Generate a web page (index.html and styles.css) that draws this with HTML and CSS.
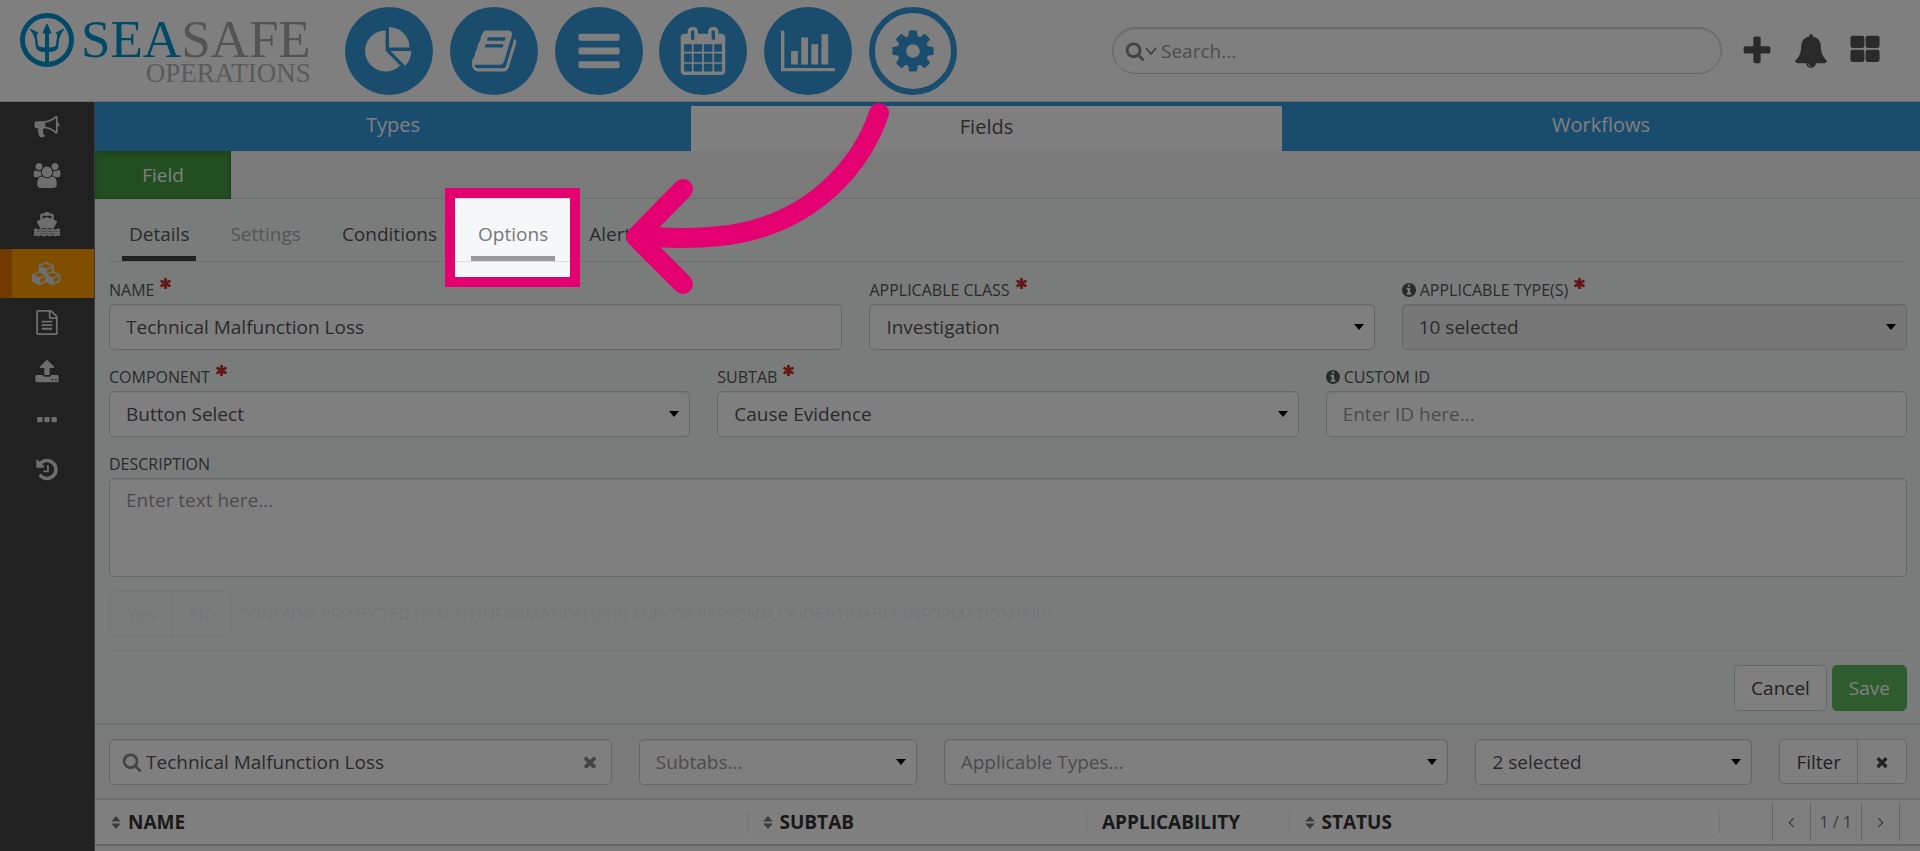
FILE: index.html
```html
<!DOCTYPE html>
<html lang="en">
<head>
    <meta charset="UTF-8">
    <meta name="viewport" content="width=device-width, initial-scale=1.0">
    <title>SeaSafe Operations - Fields</title>
    <link rel="stylesheet" href="styles.css">
</head>
<body>

    <!-- icon sprite -->
    <svg class="sprite" aria-hidden="true">
        <symbol id="i-pie" viewBox="0 0 1792 1792"><path d="M768 890l546 546q-106 108-247.5 168t-298.5 60q-209 0-385.5-103t-279.5-279.5-103-385.5 103-385.5 279.5-279.5 385.5-103v762zm187 6h773q0 157-60 298.5t-168 247.5zm709-128h-768v-768q209 0 385.5 103t279.5 279.5 103 385.5z"/></symbol>
        <symbol id="i-book" viewBox="0 0 1792 1792"><path d="M1703 478q40 57 18 129l-275 906q-19 64-76.500 107.500t-122.500 43.500h-923q-77 0-148.500-53.500t-99.500-131.500q-24-67-2-127 0-4 3-27t4-37q1-8-3-21.500t-3-19.500q2-11 8-21t16.500-23.500 16.500-23.500q23-38 45-91.500t30-91.500q3-10 .5-30t-.5-28q3-11 17-28t17-23q21-36 42-92t25-90q1-9-2.500-32t.5-28q4-13 22-30.500t22-22.500q19-26 42.500-84.500t27.500-96.500q1-8-3-25.500t-2-26.500q2-8 9-18t18-23 17-21q8-12 16.500-30.500t15-35 16-36 19.500-32 26.500-23.500 36-11.500 47.500 5.500l-1 3q38-9 51-9h761q74 0 114 56t18 130l-274 906q-36 119-71.500 153.500t-128.500 34.500h-869q-27 0-38 15-11 16-1 43 24 70 144 70h923q29 0 56-15.500t35-41.500l300-987q7-22 5-57 38 15 59 43zm-1064 2q-4 13 2 22.500t20 9.500h608q13 0 25.500-9.500t16.500-22.500l21-64q4-13-2-22.500t-20-9.500h-608q-13 0-25.500 9.500t-16.500 22.500zm-83 256q-4 13 2 22.500t20 9.500h608q13 0 25.500-9.500t16.500-22.500l21-64q4-13-2-22.500t-20-9.500h-608q-13 0-25.500 9.500t-16.500 22.500z"/></symbol>
        <symbol id="i-bars" viewBox="0 0 1792 1792"><rect x="128" y="256" width="1536" height="256" rx="64"/><rect x="128" y="768" width="1536" height="256" rx="64"/><rect x="128" y="1280" width="1536" height="256" rx="64"/></symbol>
        <symbol id="i-calendar" viewBox="0 0 1792 1792"><path d="M192 1664h288v-288h-288v288zm352 0h320v-288h-320v288zm-352-352h288v-320h-288v320zm352 0h320v-320h-320v320zm-352-384h288v-288h-288v288zm736 736h320v-288h-320v288zm-384-736h320v-288h-320v288zm768 736h288v-288h-288v288zm-384-352h320v-320h-320v320zm-352-864v-288q0-13-9.500-22.500t-22.500-9.500h-64q-13 0-22.500 9.500t-9.500 22.500v288q0 13 9.500 22.500t22.500 9.500h64q13 0 22.500-9.500t9.500-22.500zm736 864h288v-320h-288v320zm-384-384h320v-288h-320v288zm384 0h288v-288h-288v288zm32-480v-288q0-13-9.500-22.500t-22.500-9.500h-64q-13 0-22.500 9.500t-9.500 22.500v288q0 13 9.500 22.500t22.500 9.500h64q13 0 22.500-9.500t9.500-22.500zm384-64v1280q0 52-38 90t-90 38h-1408q-52 0-90-38t-38-90v-1280q0-52 38-90t90-38h128v-96q0-66 47-113t113-47h64q66 0 113 47t47 113v96h384v-96q0-66 47-113t113-47h64q66 0 113 47t47 113v96h128q52 0 90 38t38 90z"/></symbol>
        <symbol id="i-chart" viewBox="0 0 2048 1792"><path d="M640 896v512h-256v-512h256zm384-512v1024h-256v-1024h256zm1024 1152v128h-2048v-1536h128v1408h1920zm-640-896v768h-256v-768h256zm384-384v1152h-256v-1152h256z"/></symbol>
        <symbol id="i-cog" viewBox="0 0 1792 1792"><path d="M1152 896q0-106-75-181t-181-75-181 75-75 181 75 181 181 75 181-75 75-181zm512-109v222q0 12-8 23t-20 13l-185 28q-19 54-39 91 35 50 107 138 10 12 10 25t-9 23q-27 37-99 108t-94 71q-12 0-26-9l-138-108q-44 23-91 38-16 136-29 186-7 28-36 28h-222q-14 0-24.500-8.500t-11.500-21.500l-28-184q-49-16-90-37l-141 107q-10 9-25 9-14 0-25-11-126-114-165-168-7-10-7-23 0-12 8-23 15-21 51-66.500t54-70.500q-27-50-41-99l-183-27q-13-2-21-12.500t-8-23.500v-222q0-12 8-23t19-13l186-28q14-46 39-92-40-57-107-138-10-12-10-24 0-10 9-23 26-36 98.500-107.500t94.500-71.500q13 0 26 10l138 107q44-23 91-38 16-136 29-186 7-28 36-28h222q14 0 24.500 8.500t11.500 21.500l28 184q49 16 90 37l142-107q9-9 24-9 13 0 25 10 129 119 165 170 7 8 7 22 0 12-8 23-15 21-51 66.500t-54 70.500q26 50 41 98l183 28q13 2 21 12.500t8 23.500z"/></symbol>
        <symbol id="i-search" viewBox="0 0 1792 1792"><path d="M1216 832q0-185-131.500-316.500t-316.500-131.500-316.500 131.500-131.500 316.500 131.500 316.500 316.500 131.500 316.500-131.500 131.500-316.500zm512 832q0 52-38 90t-90 38q-54 0-90-38l-343-342q-179 124-399 124-143 0-273.500-55.500t-225-150-150-225-55.500-273.500 55.500-273.500 150-225 225-150 273.500-55.500 273.500 55.500 225 150 150 225 55.500 273.500q0 220-124 399l343 343q37 37 37 90z"/></symbol>
        <symbol id="i-plus" viewBox="0 0 1792 1792"><path d="M1600 736v192q0 40-28 68t-68 28h-416v416q0 40-28 68t-68 28h-192q-40 0-68-28t-28-68v-416h-416q-40 0-68-28t-28-68v-192q0-40 28-68t68-28h416v-416q0-40 28-68t68-28h192q40 0 68 28t28 68v416h416q40 0 68 28t28 68z"/></symbol>
        <symbol id="i-bell" viewBox="0 0 1792 1792"><path d="M912 1696q0-16-16-16-59 0-101.500-42.500t-42.500-101.500q0-16-16-16t-16 16q0 73 51.500 124.500t124.500 51.500q16 0 16-16zm816-288q0 52-38 90t-90 38h-448q0 106-75 181t-181 75-181-75-75-181h-448q-52 0-90-38t-38-90q50-42 91-88t85-119.500 74.500-158.500 50-206 19.500-260q0-152 117-282.500t307-158.500q-8-19-8-39 0-40 28-68t68-28 68 28 28 68q0 20-8 39 190 28 307 158.500t117 282.500q0 139 19.500 260t50 206 74.500 158.500 85 119.500 91 88z"/></symbol>
        <symbol id="i-grid" viewBox="0 0 1792 1792"><rect x="128" y="96" width="736" height="640" rx="112"/><rect x="928" y="96" width="736" height="640" rx="112"/><rect x="128" y="832" width="736" height="640" rx="112"/><rect x="928" y="832" width="736" height="640" rx="112"/></symbol>
        <symbol id="i-bullhorn" viewBox="0 0 1792 1792"><path d="M1664 640q53 0 90.500 37.500t37.500 90.500-37.500 90.500-90.500 37.500v384q0 52-38 90t-90 38q-417-347-812-380-58 19-91 66t-31 100.500 40 92.500q-20 33-23 65.500t6 58 33.500 55 48 50 61.500 50.500q-29 58-111.500 83t-168.500 11.500-132-55.500q-7-23-29.500-87.500t-32-94.500-23-89-15-101 3.500-98.500 22-110.500h-122q-66 0-113-47t-47-113v-192q0-66 47-113t113-47h480q435 0 896-384 52 0 90 38t38 90v384zm-128 604v-954q-394 302-768 343v270q377 42 768 341z"/></symbol>
        <symbol id="i-users" viewBox="0 0 2048 1792"><path d="M657 896q-162 5-265 128h-134q-82 0-138-40.500t-56-118.500q0-353 124-353 6 0 43.500 21t97.500 42.500 119 21.500q67 0 133-23-5 37-5 66 0 159 93 279zm1071 637q0 120-73 189.500t-194 69.500h-874q-121 0-194-69.500t-73-189.500q0-53 3.500-103.500t14-109 26.500-108.500 43-97.500 62-81 85.500-53.500 111.500-20q10 0 43 21.500t73 48 107 48 135 21.500 135-21.500 107-48 73-48 43-21.500q61 0 111.500 20t85.500 53.500 62 81 43 97.500 26.500 108.500 14 109 3.500 103.500zm-1024-1277q0 106-75 181t-181 75-181-75-75-181 75-181 181-75 181 75 75 181zm704 384q0 159-112.500 271.500t-271.500 112.500-271.500-112.500-112.500-271.500 112.500-271.500 271.500-112.500 271.500 112.500 112.500 271.500zm576 225q0 78-56 118.500t-138 40.500h-134q-103-123-265-128 93-120 93-279 0-29-5-66 66 23 133 23 59 0 119-21.500t97.500-42.500 43.500-21q124 0 124 353zm-128-609q0 106-75 181t-181 75-181-75-75-181 75-181 181-75 181 75 75 181z"/></symbol>
        <symbol id="i-ship" viewBox="0 0 28 26"><path d="M11.500 1.500Q11.500 0 13 0h2q1.500 0 1.500 1.500h2.500q2 0 2 2v4.500l2.500 1q1.500.6.700 2l-3.200 6h-14l-3.200-6q-.8-1.400.7-2l2.500-1v-4.500q0-2 2-2zM9.500 4v3l4.500-1.700 4.500 1.700v-3z"/><path d="M.5 19.500l2-1.500 2.500 1.500 3-1.500 3 1.500 3-1.500 3 1.500 3-1.500 3 1.500 2.500-1.500 2 1.500M.5 22l2-1.500 2.500 1.500 3-1.500 3 1.500 3-1.500 3 1.500 3-1.500 3 1.500 2.500-1.500 2 1.500M.5 24.500l2-1.500 2.500 1.500 3-1.500 3 1.500 3-1.500 3 1.500 3-1.500 3 1.500 2.500-1.500 2 1.500" fill="none" stroke="currentColor" stroke-width="1.800"/></symbol>
        <symbol id="i-cubes" viewBox="0 0 2304 1792"><path d="M640 1632l384-192v-314l-384 164v342zm-64-454l404-173-404-173-404 173zm1088 454l384-192v-314l-384 164v342zm-64-454l404-173-404-173-404 173zm-448-293l384-165v-266l-384 164v267zm-64-379l441-189-441-189-441 189zm1088 518v416q0 36-19 67t-52 47l-448 224q-25 14-57 14t-57-14l-448-224q-5-2-7-4-2 2-7 4l-448 224q-25 14-57 14t-57-14l-448-224q-33-16-52-47t-19-67v-416q0-38 21.500-70t56.500-48l434-186v-400q0-38 21.500-70t56.500-48l448-192q23-10 50-10t50 10l448 192q35 16 56.500 48t21.500 70v400l434 186q36 16 57 48t21 70z"/></symbol>
        <symbol id="i-file" viewBox="0 0 1792 1792"><path d="M1596 380q28 28 48 76t20 88v1152q0 40-28 68t-68 28h-1344q-40 0-68-28t-28-68v-1600q0-40 28-68t68-28h896q40 0 88 20t76 48zm-444-244v376h376q-10-29-22-41l-313-313q-12-12-41-22zm384 1528v-1024h-416q-40 0-68-28t-28-68v-416h-768v1536h1280zm-1024-864q0-14 9-23t23-9h704q14 0 23 9t9 23v64q0 14-9 23t-23 9h-704q-14 0-23-9t-9-23v-64zm736 224q14 0 23 9t9 23v64q0 14-9 23t-23 9h-704q-14 0-23-9t-9-23v-64q0-14 9-23t23-9h704zm0 256q14 0 23 9t9 23v64q0 14-9 23t-23 9h-704q-14 0-23-9t-9-23v-64q0-14 9-23t23-9h704z"/></symbol>
        <symbol id="i-upload" viewBox="0 0 1792 1792"><path d="M1344 1472q0-26-19-45t-45-19-45 19-19 45 19 45 45 19 45-19 19-45zm256 0q0-26-19-45t-45-19-45 19-19 45 19 45 45 19 45-19 19-45zm128-224v320q0 40-28 68t-68 28h-1472q-40 0-68-28t-28-68v-320q0-40 28-68t68-28h427q21 56 70.500 92t110.500 36h256q61 0 110.500-36t70.500-92h427q40 0 68 28t28 68zm-325-648q-17 40-59 40h-256v448q0 26-19 45t-45 19h-256q-26 0-45-19t-19-45v-448h-256q-42 0-59-40-17-39 14-69l448-448q18-19 45-19t45 19l448 448q31 30 14 69z"/></symbol>
        <symbol id="i-dots" viewBox="0 0 1792 1792"><rect x="192" y="640" width="384" height="384" rx="96"/><rect x="704" y="640" width="384" height="384" rx="96"/><rect x="1216" y="640" width="384" height="384" rx="96"/></symbol>
        <symbol id="i-history" viewBox="0 0 1792 1792"><path d="M1664 896q0 156-61 298t-164 245-245 164-298 61q-172 0-327-72.500t-264-204.500q-7-10-6.500-22.500t8.500-20.500l137-138q10-9 25-9 16 2 23 12 73 95 179 147t225 52q104 0 198.500-40.500t163.500-109.500 109.500-163.500 40.500-198.500-40.500-198.500-109.500-163.500-163.500-109.500-198.500-40.500q-98 0-188 35.500t-160 101.500l137 138q31 30 14 69-17 40-59 40h-448q-26 0-45-19t-19-45v-448q0-42 40-59 39-17 69 14l130 129q107-101 244.500-156.500t284.500-55.500q156 0 298 61t245 164 164 245 61 298zm-640-288v448q0 14-9 23t-23 9h-320q-14 0-23-9t-9-23v-64q0-14 9-23t23-9h224v-352q0-14 9-23t23-9h64q14 0 23 9t9 23z"/></symbol>
        <symbol id="i-info" viewBox="128 128 1536 1536"><path d="M1152 1376v-160q0-14-9-23t-23-9h-96v-512q0-14-9-23t-23-9h-320q-14 0-23 9t-9 23v160q0 14 9 23t23 9h96v320h-96q-14 0-23 9t-9 23v160q0 14 9 23t23 9h448q14 0 23-9t9-23zm-128-896v-160q0-14-9-23t-23-9h-192q-14 0-23 9t-9 23v160q0 14 9 23t23 9h192q14 0 23-9t9-23zm640 416q0 209-103 385.500t-279.500 279.500-385.500 103-385.500-103-279.500-279.500-103-385.500 103-385.500 279.500-279.500 385.500-103 385.500 103 279.500 279.500 103 385.500z"/></symbol>
        <symbol id="i-times" viewBox="0 0 1792 1792"><path d="M1490 1322q0 40-28 68l-136 136q-28 28-68 28t-68-28l-294-294-294 294q-28 28-68 28t-68-28l-136-136q-28-28-28-68t28-68l294-294-294-294q-28-28-28-68t28-68l136-136q28-28 68-28t68 28l294 294 294-294q28-28 68-28t68 28l136 136q28 28 28 68t-28 68l-294 294 294 294q28 28 28 68z"/></symbol>
        <symbol id="i-star" viewBox="0 0 10 10"><path d="M5 1v8M1.500 3l7 4M8.500 3l-7 4" fill="none" stroke="currentColor" stroke-width="2.600" stroke-linecap="round"/></symbol>
        <symbol id="i-sort" viewBox="0 0 10 14"><path d="M5 0l5 6H0zM0 8h10l-5 6z"/></symbol>
        <symbol id="i-left" viewBox="0 0 10 10"><path d="M7 1L3 5l4 4" fill="none" stroke="currentColor" stroke-width="1.200"/></symbol>
        <symbol id="i-right" viewBox="0 0 10 10"><path d="M3 1l4 4-4 4" fill="none" stroke="currentColor" stroke-width="1.200"/></symbol>
        <symbol id="i-down" viewBox="0 0 12 12"><path d="M1 3l5 6 5-6" fill="none" stroke="currentColor" stroke-width="1.500"/></symbol>
    </svg>

    <header class="header">
        <a class="logo" href="#">
            <svg class="logo-mark" viewBox="0 0 54 54" aria-hidden="true">
                <circle cx="27" cy="27" r="24.500" fill="none" stroke="currentColor" stroke-width="5"/>
                <path d="M27 11l4 9h-2.500v15q7 0 8-3 1-9 1.500-11l-2-1 8-4q-3 3-5 9-1 5-1.500 10.500-2 3-9 3V52h-3V38.500q-7 0-9-3-.5-5.500-1.500-10.500-2-6-5-9l8 4-2 1q.5 2 1.500 11 1 3 8 3V20H23z" stroke="currentColor"/>
            </svg>
            <span class="logo-text">
                <span class="logo-name"><span class="logo-sea">SEA</span>SAFE</span>
                <span class="logo-sub">OPERATIONS</span>
            </span>
        </a>

        <nav class="main-nav">
            <a href="#" aria-label="Dashboard"><svg><use href="#i-pie"/></svg></a>
            <a href="#" aria-label="Library"><svg><use href="#i-book"/></svg></a>
            <a href="#" aria-label="Lists"><svg><use href="#i-bars"/></svg></a>
            <a href="#" aria-label="Calendar"><svg><use href="#i-calendar"/></svg></a>
            <a href="#" aria-label="Reports"><svg class="wide"><use href="#i-chart"/></svg></a>
            <a href="#" class="current" aria-label="Administration"><svg><use href="#i-cog"/></svg></a>
        </nav>

        <label class="top-search">
            <svg class="search-icon"><use href="#i-search"/></svg>
            <svg class="search-down"><use href="#i-down"/></svg>
            <input type="text" placeholder="Search..." aria-label="Search">
        </label>

        <div class="header-icons">
            <button type="button" aria-label="Add"><svg><use href="#i-plus"/></svg></button>
            <button type="button" aria-label="Notifications"><svg><use href="#i-bell"/></svg></button>
            <button type="button" aria-label="Apps"><svg><use href="#i-grid"/></svg></button>
        </div>
    </header>

    <div class="page">
        <nav class="sidebar">
            <a href="#" aria-label="Announcements"><svg><use href="#i-bullhorn"/></svg></a>
            <a href="#" aria-label="Users"><svg><use href="#i-users"/></svg></a>
            <a href="#" aria-label="Vessels"><svg><use href="#i-ship"/></svg></a>
            <a href="#" class="current" aria-label="Fields"><svg><use href="#i-cubes"/></svg></a>
            <a href="#" aria-label="Documents"><svg><use href="#i-file"/></svg></a>
            <a href="#" aria-label="Upload"><svg><use href="#i-upload"/></svg></a>
            <a href="#" aria-label="More"><svg><use href="#i-dots"/></svg></a>
            <a href="#" aria-label="History"><svg><use href="#i-history"/></svg></a>
        </nav>

        <main class="content">
            <nav class="top-tabs">
                <a href="#">Types</a>
                <a href="#" class="current">Fields</a>
                <a href="#">Workflows</a>
            </nav>

            <div class="sub-bar">
                <button type="button" class="field-btn">Field</button>
            </div>

            <form class="panel">
                <nav class="form-tabs">
                    <a href="#" class="current">Details</a>
                    <a href="#" class="disabled">Settings</a>
                    <a href="#">Conditions</a>
                    <a href="#" class="hover">Options
                        <span class="spotlight"></span>
                        <svg class="arrow" viewBox="0 0 270 160" aria-hidden="true">
                            <path d="M255 20C240 66 192 133 96 143Q60 147 16 143M59 96L12 144L59 191"/>
                        </svg>
                    </a>
                    <a href="#">Alerts</a>
                </nav>

                <div class="row row-wide">
                    <div class="group">
                        <label for="name">NAME <svg class="req"><use href="#i-star"/></svg></label>
                        <input id="name" class="control" type="text" value="Technical Malfunction Loss">
                    </div>
                    <div class="group">
                        <label for="class">APPLICABLE CLASS <svg class="req"><use href="#i-star"/></svg></label>
                        <div class="select"><select id="class" class="control"><option>Investigation</option></select></div>
                    </div>
                    <div class="group">
                        <label for="types"><svg class="info"><use href="#i-info"/></svg> APPLICABLE TYPE(S) <svg class="req"><use href="#i-star"/></svg></label>
                        <div class="select"><select id="types" class="control locked"><option>10 selected</option></select></div>
                    </div>
                </div>

                <div class="row">
                    <div class="group">
                        <label for="component">COMPONENT <svg class="req"><use href="#i-star"/></svg></label>
                        <div class="select"><select id="component" class="control"><option>Button Select</option></select></div>
                    </div>
                    <div class="group">
                        <label for="subtab">SUBTAB <svg class="req"><use href="#i-star"/></svg></label>
                        <div class="select"><select id="subtab" class="control"><option>Cause Evidence</option></select></div>
                    </div>
                    <div class="group">
                        <label for="custom"><svg class="info"><use href="#i-info"/></svg> CUSTOM ID</label>
                        <input id="custom" class="control" type="text" placeholder="Enter ID here...">
                    </div>
                </div>

                <div class="group">
                    <label for="description">DESCRIPTION</label>
                    <textarea id="description" class="control" placeholder="Enter text here..."></textarea>
                </div>

                <div class="phi">
                    <div class="btn-group">
                        <button type="button" disabled>Yes</button>
                        <button type="button" disabled>No</button>
                    </div>
                    <span>CONTAINS PROTECTED HEALTH INFORMATION (PHI) AND/OR PERSONALLY IDENTIFIABLE INFORMATION (PII)?</span>
                </div>

                <div class="actions">
                    <button type="button" class="btn">Cancel</button>
                    <button type="submit" class="btn btn-save">Save</button>
                </div>
            </form>

            <div class="filters">
                <div class="filter-search control">
                    <svg class="search-icon"><use href="#i-search"/></svg>
                    <input type="text" value="Technical Malfunction Loss" aria-label="Search fields">
                    <button type="button" aria-label="Clear"><svg><use href="#i-times"/></svg></button>
                </div>
                <div class="select"><select class="control empty" aria-label="Subtabs"><option>Subtabs...</option></select></div>
                <div class="select"><select class="control empty" aria-label="Applicable types"><option>Applicable Types...</option></select></div>
                <div class="select"><select class="control" aria-label="Status"><option>2 selected</option></select></div>
                <div class="btn-group">
                    <button type="button">Filter</button>
                    <button type="button" aria-label="Clear filter"><svg><use href="#i-times"/></svg></button>
                </div>
            </div>

            <table class="list">
                <thead>
                    <tr>
                        <th class="c-name"><svg class="sort"><use href="#i-sort"/></svg>NAME</th>
                        <th class="c-subtab"><svg class="sort"><use href="#i-sort"/></svg>SUBTAB</th>
                        <th class="c-appl">APPLICABILITY</th>
                        <th class="c-status"><svg class="sort"><use href="#i-sort"/></svg>STATUS</th>
                        <th class="c-pager">
                            <div class="pager">
                                <button type="button" aria-label="Previous"><svg><use href="#i-left"/></svg></button>
                                <span>1 / 1</span>
                                <button type="button" aria-label="Next"><svg><use href="#i-right"/></svg></button>
                            </div>
                        </th>
                    </tr>
                </thead>
            </table>
        </main>
    </div>

</body>
</html>
```

FILE: styles.css
```css
* {
    box-sizing: border-box;
}
html, body {
    height: 100%;
}
body {
    margin: 0;
    display: flex;
    flex-direction: column;
    overflow: hidden;
    font-family: "Open Sans", sans-serif;
    font-size: 19px;
    line-height: 24px;
    color: #555;
    background: #f4f4f4;
}
a {
    color: inherit;
    text-decoration: none;
}
button, input, select, textarea {
    font: inherit;
    color: inherit;
}
button {
    padding: 0;
    border: 0;
    background: none;
}
svg {
    display: block;
    flex: none;
    fill: currentColor;
}
.sprite {
    position: absolute;
    width: 0;
    height: 0;
}

/* header */
.header {
    display: flex;
    align-items: center;
    height: 102px;
    flex: none;
    background: #fff;
    border-bottom: 1px solid #ddd;
}
.logo {
    display: flex;
    align-items: flex-start;
    width: 345px;
    flex: none;
    height: 76px;
    padding-left: 20px;
    color: #0092cf;
}
.logo-mark {
    width: 54px;
    height: 54px;
}
.logo-text {
    display: flex;
    flex-direction: column;
    align-items: flex-end;
    margin-left: 7px;
    font-family: "Liberation Serif", serif;
    color: #b4b4b4;
}
.logo-name {
    font-size: 53px;
    line-height: 52px;
    color: #a9a9a9;
}
.logo-sea {
    color: #0092cf;
}
.logo-sub {
    font-size: 27px;
    line-height: 16px;
}
.main-nav {
    display: flex;
    justify-content: space-between;
    width: 612px;
    flex: none;
}
.main-nav a {
    display: flex;
    align-items: center;
    justify-content: center;
    width: 88px;
    height: 88px;
    border-radius: 50%;
    background: #3498db;
    color: #fff;
}
.main-nav svg {
    width: 48px;
    height: 48px;
}
.main-nav svg.wide {
    width: 54px;
}
.main-nav a.current {
    border: 6px solid #3498db;
    background: #fff;
    color: #3498db;
}
.top-search {
    display: flex;
    align-items: center;
    flex: 1;
    height: 47px;
    margin-left: 155px;
    padding-left: 12px;
    border: 1px solid #ccc;
    border-radius: 24px;
    box-shadow: inset 0 1px 2px rgba(0, 0, 0, 0.2);
}
.search-icon {
    width: 20px;
    height: 20px;
    color: #888;
}
.search-down {
    width: 12px;
    height: 12px;
    color: #777;
}
.top-search input {
    flex: 1;
    min-width: 0;
    padding: 0 4px;
    border: 0;
    background: none;
}
.header-icons {
    display: flex;
    align-items: center;
    gap: 20px;
    padding: 0 38px 0 18px;
    color: #555;
}
.header-icons svg {
    width: 34px;
    height: 34px;
}

/* layout */
.page {
    display: flex;
    flex: 1;
    min-height: 0;
}
.sidebar {
    width: 95px;
    flex: none;
    background: #424242;
    border-right: 1px solid #777;
    color: #ddd;
}
.sidebar a {
    display: flex;
    align-items: center;
    justify-content: center;
    height: 49px;
}
.sidebar svg {
    width: 30px;
    height: 25px;
}
.sidebar a.current {
    padding-right: 12px;
    border-left: 12px solid #e67600;
    background: #ff9c00;
}
.content {
    flex: 1;
    min-width: 0;
}
.top-tabs {
    display: flex;
    height: 49px;
    background: #3498db;
    color: #fff;
    text-align: center;
    font-size: 20px;
    line-height: 45px;
}
.top-tabs a {
    flex: 596;
}
.top-tabs a:last-child {
    flex: 638;
}
.top-tabs a.current {
    flex: 591;
    border-top: 4px solid #3498db;
    line-height: 41px;
    background: #fff;
    color: #555;
}
.sub-bar {
    height: 48px;
    border-bottom: 1px solid #ddd;
    background: #f4f4f4;
}
.field-btn {
    display: block;
    width: 136px;
    height: 48px;
    border: 1px solid #398439;
    background: #449d44;
    box-shadow: inset 0 3px 5px rgba(0, 0, 0, 0.13);
    color: #fff;
}

/* form */
.panel {
    padding: 0 13px 0 14px;
    background: #f4f8f8;
    border-bottom: 2px solid #e0e3e3;
}
.form-tabs {
    display: flex;
    gap: 27px;
    height: 63px;
    margin-bottom: 16px;
    padding: 19px 13px 0;
    border-bottom: 1px solid #ddd;
}
.form-tabs a {
    position: relative;
    padding: 4px 7px 0;
    border-bottom: 5px solid transparent;
}
.form-tabs a.current {
    border-bottom-color: #444;
}
.form-tabs a.disabled {
    color: #aaa;
}
.form-tabs a.hover {
    border-bottom-color: #999;
    color: #777;
    z-index: 1;
}
/* dims everything but the framed tab */
.spotlight {
    position: absolute;
    inset: -30px -25px -31px -26px;
    border: 10px solid #e50072;
    box-shadow: 0 0 0 4000px rgba(0, 0, 0, 0.5);
    pointer-events: none;
}
.arrow {
    position: absolute;
    left: 153px;
    top: -125px;
    width: 270px;
    height: 160px;
    overflow: visible;
    pointer-events: none;
}
.arrow path {
    fill: none;
    stroke: #e50072;
    stroke-width: 20;
    stroke-linecap: round;
    stroke-linejoin: round;
}
.row {
    display: grid;
    grid-template-columns: 1fr 1fr 1fr;
    gap: 27px;
    margin-bottom: 15px;
}
.row-wide {
    grid-template-columns: 733fr 505fr 505fr;
}
.group label {
    display: flex;
    align-items: center;
    gap: 4px;
    height: 24px;
    margin-bottom: 2px;
    font-size: 16px;
}
.info {
    width: 14px;
    height: 14px;
}
.req {
    width: 11px;
    height: 11px;
    margin-left: 2px;
    align-self: flex-start;
    color: #c9302c;
}
.control {
    display: block;
    width: 100%;
    height: 46px;
    margin: 0;
    padding: 0 16px;
    border: 1px solid #ccc;
    border-radius: 5px;
    background: #fff;
    box-shadow: inset 0 1px 1px rgba(0, 0, 0, 0.08);
    appearance: none;
}
textarea.control {
    height: 99px;
    padding: 9px 16px;
    resize: none;
}
.control.locked {
    background: #eee;
}
.control.empty {
    color: #999;
}
::placeholder {
    color: #999;
    opacity: 1;
}
.select {
    position: relative;
}
.select::after {
    content: "";
    position: absolute;
    right: 11px;
    top: 20px;
    border: 5px solid transparent;
    border-top: 6px solid #000;
    border-bottom: 0;
}
.btn-group {
    display: flex;
    height: 45px;
    border: 1px solid #ccc;
    border-radius: 5px;
    background: #fff;
}
.btn-group button {
    padding: 0 16px;
}
.btn-group button + button {
    border-left: 1px solid #ccc;
}
.btn-group svg {
    width: 16px;
    height: 16px;
}
.phi {
    display: flex;
    align-items: center;
    gap: 6px;
    padding: 14px 0 13px;
    border-bottom: 1px solid #e9ecec;
    font-size: 16px;
    color: #e9ecec;
}
.phi .btn-group {
    height: 46px;
    font-size: 19px;
    border-color: #e9ecec;
    background: none;
}
.phi .btn-group button + button {
    border-color: #e9ecec;
}
.actions {
    display: flex;
    justify-content: flex-end;
    gap: 5px;
    padding: 14px 0 12px;
}
.btn {
    height: 46px;
    padding: 0 16px;
    border: 1px solid #ccc;
    border-radius: 5px;
    background: #fff;
    color: #444;
}
.btn-save {
    border-color: #5cb85c;
    background: #5cb85c;
    color: #fff;
}

/* filters */
.filters {
    display: grid;
    grid-template-columns: 503fr 278fr 505fr 277fr auto;
    gap: 27px;
    padding: 14px 13px 13px 14px;
    border-bottom: 2px solid #ddd;
    background: #f4f4f4;
}
.filter-search {
    display: flex;
    align-items: center;
    padding: 0 12px;
}
.filter-search input {
    flex: 1;
    min-width: 0;
    padding: 0 4px;
    border: 0;
    background: none;
}
.filter-search button svg {
    width: 18px;
    height: 18px;
    color: #888;
}
.filters .btn-group {
    color: #444;
}

/* list */
.list {
    width: 100%;
    table-layout: fixed;
    border-collapse: collapse;
    background: #fff;
    border-bottom: 2px solid #ccc;
}
.list th {
    height: 45px;
    padding: 0 16px;
    text-align: left;
    color: #333;
}
.list th + th {
    background: linear-gradient(#e8e8e8, #e8e8e8) left center / 1px 22px no-repeat;
}
.list .c-pager {
    padding: 0 20px 0 0;
}
.c-name {
    width: 35.7%;
}
.c-subtab {
    width: 18.6%;
}
.c-appl {
    width: 11.1%;
}
.c-status {
    width: 23.6%;
}
.c-pager {
    width: 11%;
}
.sort {
    display: inline-block;
    width: 10px;
    height: 13px;
    margin-right: 7px;
    color: #777;
}
.pager {
    display: flex;
    justify-content: flex-end;
    height: 38px;
    font-size: 16px;
    font-weight: normal;
    line-height: 38px;
    color: #777;
}
.pager > * {
    padding: 0 9px;
    border-left: 1px solid #ccc;
}
.pager button {
    padding: 0 13px;
}
.pager button:last-child {
    border-right: 1px solid #ccc;
}
.pager svg {
    width: 11px;
    height: 11px;
}
```
